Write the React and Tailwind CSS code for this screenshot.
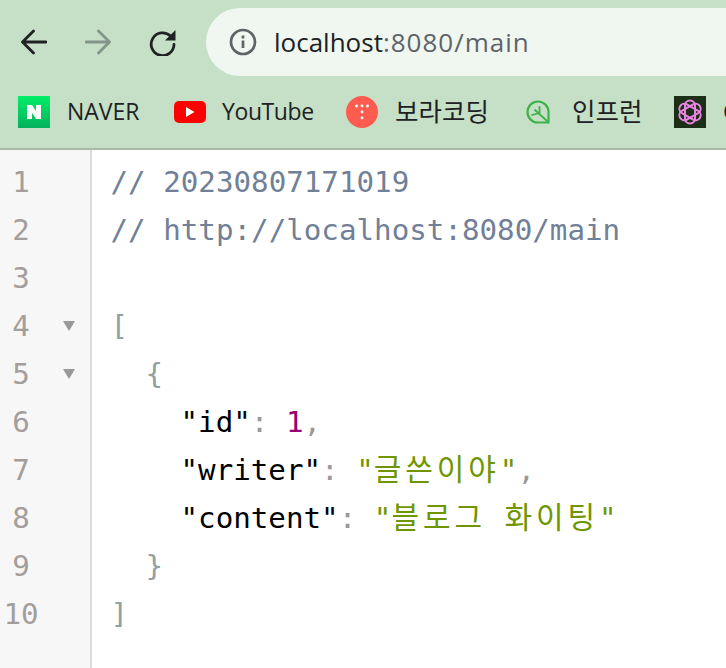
import React from 'react';

const MONO = "font-['DejaVu_Sans_Mono','Noto_Sans_CJK_KR',monospace]";
const UI = "font-['Open_Sans','Noto_Sans_CJK_KR',sans-serif]";

const Punct = ({ children }) => <span className="text-[#999999]">{children}</span>;
const Key = ({ children }) => <span className="text-black">{children}</span>;
const Hangul = ({ children }) => (
  <span className="text-[#6f9600] font-['Noto_Sans_CJK_KR',sans-serif] font-normal text-[30px] leading-none tracking-[3.9px] [word-spacing:8px]">{children}</span>
);
const Str = ({ children }) => <span className="text-[#6f9600]">{children}</span>;

const LINES = [
  { fold: false, body: <span className="text-[#718096]">// 20230807171019</span> },
  { fold: false, body: <span className="text-[#718096]">// http://localhost:8080/main</span> },
  { fold: false, body: null },
  { fold: true, body: <span className="text-[#93a0a2]">[</span> },
  { fold: true, body: <span className="pl-[35px] text-[#93a0a2]">{'{'}</span> },
  {
    fold: false,
    body: (
      <span className="pl-[70px]">
        <Key>"id"</Key><Punct>: </Punct><span className="text-[#990073]">1</span><Punct>,</Punct>
      </span>
    ),
  },
  {
    fold: false,
    body: (
      <span className="pl-[70px]">
        <Key>"writer"</Key><Punct>: </Punct><Str>"</Str><Hangul>글쓴이야</Hangul><Str>"</Str><Punct>,</Punct>
      </span>
    ),
  },
  {
    fold: false,
    body: (
      <span className="pl-[70px]">
        <Key>"content"</Key><Punct>: </Punct><Str>"</Str><Hangul>블로그 화이팅</Hangul><Str>"</Str>
      </span>
    ),
  },
  { fold: false, body: <span className="pl-[35px] text-[#93a0a2]">{'}'}</span> },
  { fold: false, body: <span className="text-[#93a0a2]">]</span> },
];

function NavIcons() {
  return (
    <div className="flex items-center gap-[38px] pl-[21px] pr-[30px]">
      <svg width="26" height="26" viewBox="0 0 26 26" fill="none" stroke="#202124" strokeWidth="2.8" strokeLinecap="round" strokeLinejoin="round">
        <path d="M25 13H2M12.5 2 1.5 13l11 11" />
      </svg>
      <svg width="26" height="26" viewBox="0 0 26 26" fill="none" stroke="#83948a" strokeWidth="2.8" strokeLinecap="round" strokeLinejoin="round">
        <path d="M1 13h23M13.5 2l11 11-11 11" />
      </svg>
      <svg width="27" height="27" viewBox="0 0 27 27" fill="none">
        <path d="M21.5 7A11.4 11.4 0 1 0 25 15.5" stroke="#202124" strokeWidth="2.8" strokeLinecap="round" />
        <path d="M26.5 1v10.5H16z" fill="#202124" />
      </svg>
    </div>
  );
}

function NaverIcon() {
  return (
    <div className="w-8 h-8 flex items-center justify-center bg-gradient-to-b from-[#03ee68] to-[#03b15c]">
      <svg width="14" height="14" viewBox="0 0 14 14" fill="#ffffff"><path d="M0 0h5l4 6V0h5v14H9L5 8v6H0z" /></svg>
    </div>
  );
}

function YoutubeIcon() {
  return (
    <div className="w-8 h-[22px] rounded-[5px] bg-[#ff0000] flex items-center justify-center">
      <svg width="9" height="10" viewBox="0 0 9 10" fill="#ffffff"><path d="M0 0l8.5 5L0 10z" /></svg>
    </div>
  );
}

function TeamIcon() {
  return (
    <div className="w-8 h-8 rounded-full bg-[#ff5c50] flex items-center justify-center">
      <svg width="16" height="16" viewBox="0 0 16 16" fill="#ffffff">
        <circle cx="2.5" cy="2" r="1.4" /><circle cx="8" cy="2" r="1.4" /><circle cx="13.5" cy="2" r="1.4" />
        <circle cx="8" cy="8" r="1.4" /><circle cx="8" cy="14" r="1.4" />
      </svg>
    </div>
  );
}

function LeafIcon() {
  return (
    <svg width="24" height="24" viewBox="0 0 24 24" fill="none" stroke="#3fb14a" strokeWidth="2.2" strokeLinecap="round">
      <path d="M22.5 22.5H11.5a10.5 10.5 0 1 1 11-10.5z" />
      <path d="M21 21 9 10M13.5 14V7M12 13.5 6 15" strokeWidth="1.8" />
    </svg>
  );
}

function GptIcon() {
  return (
    <div className="w-8 h-8 bg-[#1b2f17] flex items-center justify-center">
      <svg width="26" height="26" viewBox="0 0 26 26" fill="none" stroke="#ea84e4" strokeWidth="2">
        <rect x="8" y="1.5" width="10" height="23" rx="5" />
        <rect x="8" y="1.5" width="10" height="23" rx="5" transform="rotate(60 13 13)" />
        <rect x="8" y="1.5" width="10" height="23" rx="5" transform="rotate(120 13 13)" />
      </svg>
    </div>
  );
}

function Bookmark({ icon, label, width, textClass }) {
  return (
    <div className={`flex items-center shrink-0 ${width}`}>
      <div className="w-8 h-8 shrink-0 flex items-center justify-center">{icon}</div>
      <span className={`text-[#202124] whitespace-nowrap pb-[2px] ${textClass}`}>{label}</span>
    </div>
  );
}

export default function App() {
  return (
    <div className="w-[726px] h-[668px] overflow-hidden bg-white flex flex-col">
      {/* browser chrome */}
      <div className={`${UI} bg-[#c5e0c6] border-b-2 border-[#a9b8a9] h-[150px] shrink-0`}>
        <div className="flex items-center h-[76px] pt-[8px]">
          <NavIcons />
          <div className="flex-1 h-[68px] rounded-l-[34px] bg-[#f0f7f1] flex items-center pl-[23px]">
            <svg width="28" height="28" viewBox="0 0 28 28" fill="none" stroke="#5f6368" strokeWidth="2.7">
              <circle cx="14" cy="14" r="12" />
              <path d="M14 12.5v7.5M14 7.5v3" />
            </svg>
            <span className="ml-[17px] text-[26px] text-[#202124]">
              localhost<span className="text-[#5f6368] tracking-[1px]">:8080/main</span>
            </span>
          </div>
        </div>
        <div className="flex items-center h-[72px] pl-[18px] overflow-hidden">
          <Bookmark icon={<NaverIcon />} label="NAVER" width="w-[156px]" textClass="ml-[17px] text-[23px]" />
          <Bookmark icon={<YoutubeIcon />} label="YouTube" width="w-[172px]" textClass="ml-[16px] text-[23px] tracking-[-0.4px]" />
          <Bookmark icon={<TeamIcon />} label="보라코딩" width="w-[176px]" textClass="ml-[17px] text-[25.5px]" />
          <Bookmark icon={<LeafIcon />} label="인프런" width="w-[152px]" textClass="ml-[18px] text-[25.5px]" />
          <Bookmark icon={<GptIcon />} label="ChatGPT" width="w-[100px]" textClass="ml-[17px] text-[23px]" />
        </div>
      </div>

      {/* json viewer */}
      <div className={`${MONO} flex-1 flex text-[29.2px] leading-[48px]`}>
        <div className="w-[92px] h-full shrink-0 bg-[#f7f7f7] border-r-2 border-[#dddddd] pt-2">
          {LINES.map((line, i) => (
            <div key={i} className="h-12 flex items-center">
              <span className="w-[42px] text-center text-[#a39e9b]">{i + 1}</span>
              {line.fold && <span className="ml-[21px] w-0 h-0 border-x-[6px] border-x-transparent border-t-[10px] border-t-[#999999]" />}
            </div>
          ))}
        </div>
        <div className="pl-[18.5px] pt-2">
          {LINES.map((line, i) => (
            <div key={i} className="h-12 flex items-center whitespace-pre">{line.body}</div>
          ))}
        </div>
      </div>
    </div>
  );
}
